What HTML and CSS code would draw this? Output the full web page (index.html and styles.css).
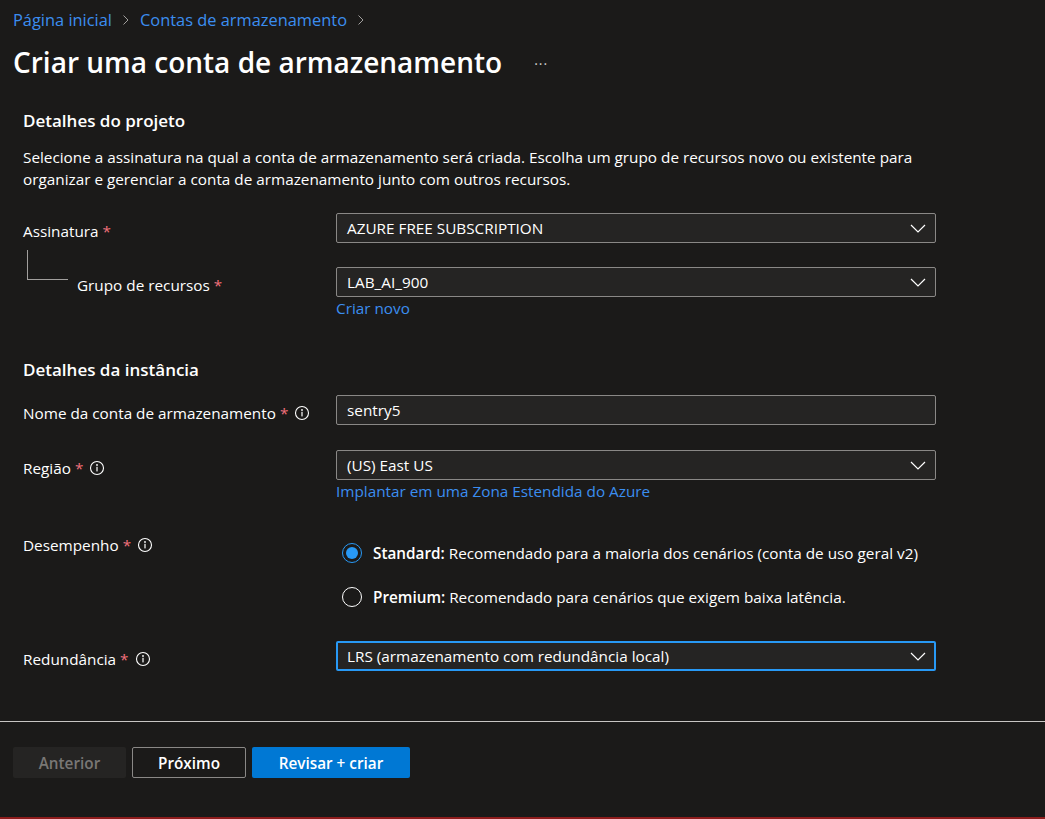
FILE: index.html
```html
<!DOCTYPE html>
<html lang="pt-BR">
<head>
<meta charset="utf-8">
<title>Criar uma conta de armazenamento</title>
<link rel="stylesheet" href="styles.css">
</head>
<body>
<div class="page">
  <nav class="crumbs">
    <a class="crumb">Página inicial</a>
    <svg class="crumb-sep" width="8" height="12" viewBox="0 0 8 12"><polyline points="1.5,1.5 6,6 1.5,10.5" fill="none" stroke="#a19f9d" stroke-width="1"/></svg>
    <a class="crumb">Contas de armazenamento</a>
    <svg class="crumb-sep" width="8" height="12" viewBox="0 0 8 12"><polyline points="1.5,1.5 6,6 1.5,10.5" fill="none" stroke="#a19f9d" stroke-width="1"/></svg>
  </nav>
  <header class="title-row">
    <h1 class="title">Criar uma conta de armazenamento</h1>
    <span class="more">···</span>
  </header>

  <main class="form">
    <h2 class="section">Detalhes do projeto</h2>
    <p class="desc">Selecione a assinatura na qual a conta de armazenamento será criada. Escolha um grupo de recursos novo ou existente para organizar e gerenciar a conta de armazenamento junto com outros recursos.</p>

    <div class="row row-sub">
      <div class="label">Assinatura <span class="req">*</span></div>
      <div class="field">
        <div class="select"><span>AZURE FREE SUBSCRIPTION</span>
          <svg class="chev" width="16" height="9" viewBox="0 0 16 9"><polyline points="1,1 8,8 15,1" fill="none" stroke="#ffffff" stroke-width="1.2"/></svg>
        </div>
      </div>
    </div>

    <div class="row row-group">
      <div class="label label-child">Grupo de recursos <span class="req">*</span></div>
      <div class="field">
        <div class="select"><span>LAB_AI_900</span>
          <svg class="chev" width="16" height="9" viewBox="0 0 16 9"><polyline points="1,1 8,8 15,1" fill="none" stroke="#ffffff" stroke-width="1.2"/></svg>
        </div>
        <a class="link">Criar novo</a>
      </div>
    </div>

    <h2 class="section section-2">Detalhes da instância</h2>

    <div class="row row-name">
      <div class="label">Nome da conta de armazenamento <span class="req">*</span>
        <svg class="info" width="16" height="16" viewBox="0 0 16 16"><circle cx="8" cy="8" r="6.5" fill="none" stroke="#ffffff" stroke-width="1.1"/><circle cx="8" cy="5" r="0.9" fill="#ffffff"/><rect x="7.4" y="6.8" width="1.2" height="4.6" fill="#ffffff"/></svg>
      </div>
      <div class="field">
        <div class="input">sentry5</div>
      </div>
    </div>

    <div class="row row-region">
      <div class="label">Região <span class="req">*</span>
        <svg class="info" width="16" height="16" viewBox="0 0 16 16"><circle cx="8" cy="8" r="6.5" fill="none" stroke="#ffffff" stroke-width="1.1"/><circle cx="8" cy="5" r="0.9" fill="#ffffff"/><rect x="7.4" y="6.8" width="1.2" height="4.6" fill="#ffffff"/></svg>
      </div>
      <div class="field">
        <div class="select"><span>(US) East US</span>
          <svg class="chev" width="16" height="9" viewBox="0 0 16 9"><polyline points="1,1 8,8 15,1" fill="none" stroke="#ffffff" stroke-width="1.2"/></svg>
        </div>
        <a class="link">Implantar em uma Zona Estendida do Azure</a>
      </div>
    </div>

    <div class="row row-perf">
      <div class="label">Desempenho <span class="req">*</span>
        <svg class="info" width="16" height="16" viewBox="0 0 16 16"><circle cx="8" cy="8" r="6.5" fill="none" stroke="#ffffff" stroke-width="1.1"/><circle cx="8" cy="5" r="0.9" fill="#ffffff"/><rect x="7.4" y="6.8" width="1.2" height="4.6" fill="#ffffff"/></svg>
      </div>
      <div class="field radios">
        <label class="radio"><span class="dot dot-on"></span><span><b>Standard:</b> Recomendado para a maioria dos cenários (conta de uso geral v2)</span></label>
        <label class="radio"><span class="dot"></span><span><b>Premium:</b> Recomendado para cenários que exigem baixa latência.</span></label>
      </div>
    </div>

    <div class="row row-red">
      <div class="label">Redundância <span class="req">*</span>
        <svg class="info" width="16" height="16" viewBox="0 0 16 16"><circle cx="8" cy="8" r="6.5" fill="none" stroke="#ffffff" stroke-width="1.1"/><circle cx="8" cy="5" r="0.9" fill="#ffffff"/><rect x="7.4" y="6.8" width="1.2" height="4.6" fill="#ffffff"/></svg>
      </div>
      <div class="field">
        <div class="select select-focus"><span>LRS (armazenamento com redundância local)</span>
          <svg class="chev" width="16" height="9" viewBox="0 0 16 9"><polyline points="1,1 8,8 15,1" fill="none" stroke="#ffffff" stroke-width="1.2"/></svg>
        </div>
      </div>
    </div>
  </main>

  <footer class="footer">
    <button class="btn btn-disabled">Anterior</button>
    <button class="btn btn-outline">Próximo</button>
    <button class="btn btn-primary">Revisar + criar</button>
  </footer>
  <div class="bottom-bar"></div>
</div>
</body>
</html>
```

FILE: styles.css
```css
* { box-sizing: border-box; }
html, body { margin: 0; padding: 0; }
body {
  background: #1b1a19;
  color: #ffffff;
  font-family: "Open Sans", "Noto Sans", "Liberation Sans", sans-serif;
  font-size: 15.3px;
}
.page {
  height: 819px;
  display: flex;
  flex-direction: column;
}
.crumbs {
  display: flex;
  align-items: center;
  gap: 10px;
  padding: 9px 13px 0;
  height: 31px;
  font-size: 16.4px;
  line-height: 22px;
}
.crumb { color: #3b8ef0; }
.crumb-sep { display: block; }
.title-row {
  display: flex;
  align-items: center;
  padding: 13px 13px 0;
}
.title {
  margin: 0;
  font-size: 28px;
  font-weight: 600;
  line-height: 36px;
}
.more {
  margin-left: 32px;
  font-size: 14px;
  letter-spacing: 1px;
  color: #d2d0ce;
  line-height: 36px;
  position: relative;
  top: 2px;
}
.form {
  padding: 0 23px;
  flex: 1;
}
.section {
  margin: 29px 0 0;
  font-size: 17px;
  font-weight: 600;
  line-height: 24px;
}
.section-2 { margin-top: 39px; }
.desc {
  margin: 13px 0 0;
  line-height: 22px;
  max-width: 910px;
}
.row {
  display: grid;
  grid-template-columns: 313px 600px;
  margin-top: 25px;
}
.row-sub { margin-top: 23px; }
.row-group { margin-top: 24px; }
.row-name { margin-top: 13px; }
.label {
  display: flex;
  align-items: center;
  padding-top: 7px;
  line-height: 22px;
  height: 29px;
  white-space: nowrap;
}
.req { color: #f1707b; margin-left: 4px; }
.info { margin-left: 6px; }
.label-child {
  position: relative;
  padding-left: 54px;
}
.label-child::before {
  content: "";
  position: absolute;
  left: 4px;
  top: -17px;
  width: 40px;
  height: 29px;
  border-left: 1px solid #a19f9d;
  border-bottom: 1px solid #a19f9d;
}
.field { display: flex; flex-direction: column; }
.select, .input {
  height: 30px;
  border: 1px solid #8a8886;
  border-radius: 2px;
  background: #252423;
  display: flex;
  align-items: center;
  justify-content: space-between;
  padding: 0 9px 0 10px;
  line-height: 22px;
}
.select-focus {
  border: 2px solid #2899f5;
  padding: 0 8px 0 9px;
}
.chev { display: block; }
.link {
  color: #3b8ef0;
  line-height: 22px;
}
.row-perf .label { align-self: start; }
.radios {
  padding-top: 15px;
  padding-left: 6px;
  gap: 22px;
}
.radio {
  display: flex;
  align-items: center;
  gap: 11px;
  line-height: 22px;
}
.radio b { font-weight: 600; }
.dot {
  width: 20px;
  height: 20px;
  border-radius: 50%;
  border: 1px solid #ffffff;
  flex: none;
  position: relative;
}
.dot-on { border-color: #2899f5; }
.dot-on::after {
  content: "";
  position: absolute;
  left: 3px;
  top: 3px;
  width: 12px;
  height: 12px;
  border-radius: 50%;
  background: #2899f5;
}
.row-red { margin-top: 33px; }
.footer {
  border-top: 1px solid #c8c6c4;
  display: flex;
  gap: 6px;
  padding: 25px 13px 0;
  height: 96px;
}
.btn {
  height: 31px;
  border-radius: 2px;
  font-family: inherit;
  font-size: 15.3px;
  font-weight: 600;
  border: 1px solid transparent;
  color: #ffffff;
  padding: 0;
}
.btn-disabled {
  width: 113px;
  background: #252423;
  color: #797775;
}
.btn-outline {
  width: 114px;
  background: transparent;
  border-color: #8a8886;
}
.btn-primary {
  width: 158px;
  background: #0078d4;
}
.bottom-bar {
  height: 2px;
  background: #8e1c1c;
}
```
